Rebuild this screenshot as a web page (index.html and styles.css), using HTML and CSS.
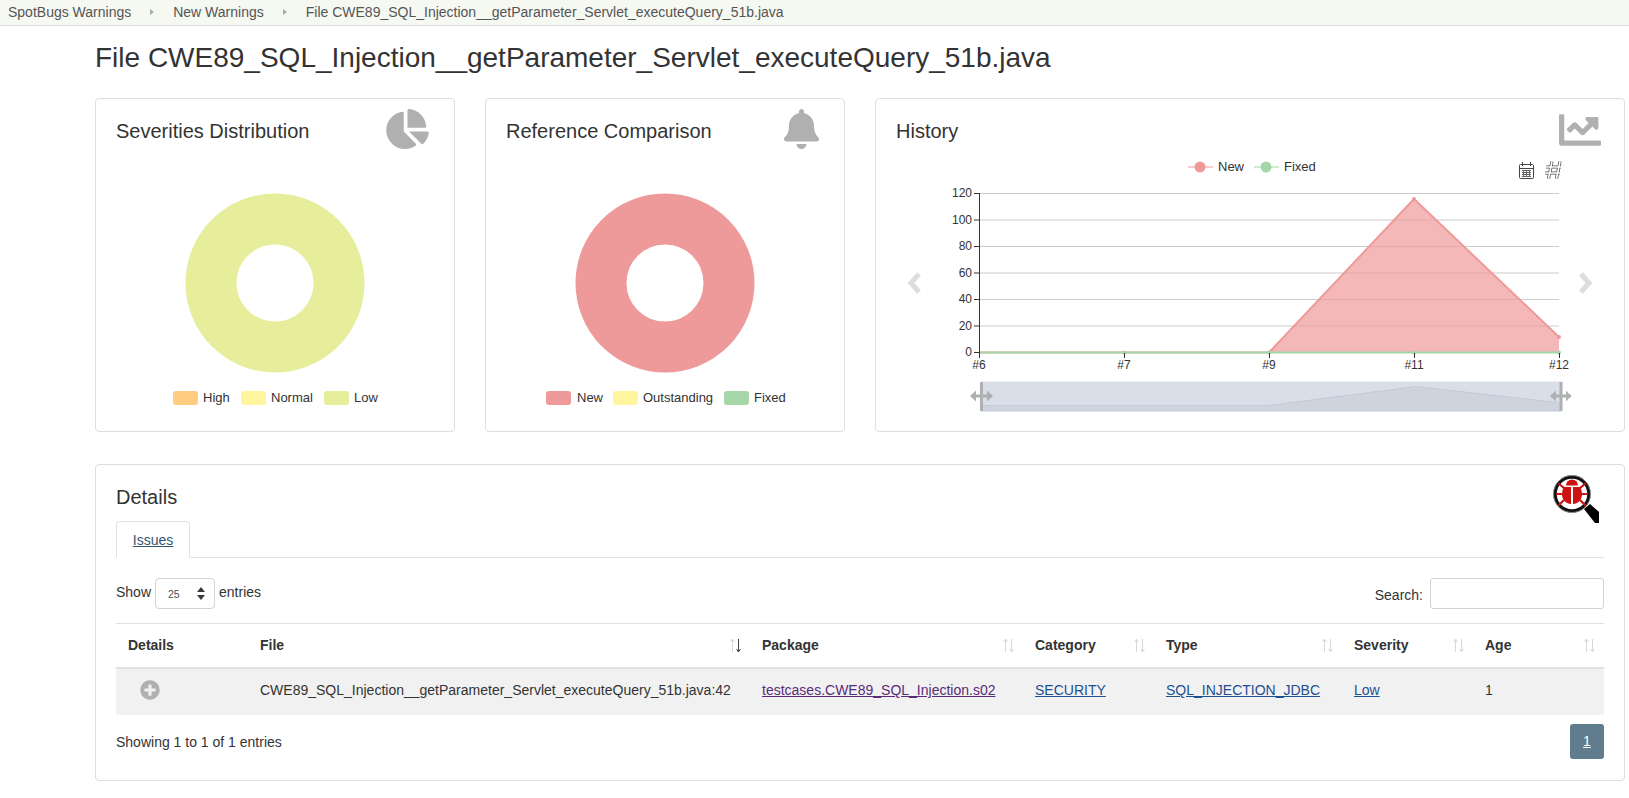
FILE: index.html
```html
<!DOCTYPE html>
<html lang="en">
  <head>
    <meta charset="UTF-8" />
    <meta name="viewport" content="width=device-width, initial-scale=1.0" />
    <title>File CWE89_SQL_Injection__getParameter_Servlet_executeQuery_51b.java</title>
    <link rel="stylesheet" href="styles.css">
  </head>
  <body>
    <nav class="crumbs">
      <span class="crumb">SpotBugs Warnings</span>
      <span class="crumb-sep"></span>
      <span class="crumb">New Warnings</span>
      <span class="crumb-sep"></span>
      <span class="crumb">File CWE89_SQL_Injection__getParameter_Servlet_executeQuery_51b.java</span>
    </nav>

    <main class="page">
      <h1 class="page-title">File CWE89_SQL_Injection__getParameter_Servlet_executeQuery_51b.java</h1>

      <section class="chart-row">
        <div class="card">
          <div class="card-head">
            <h2 class="card-title">Severities Distribution</h2>
            <svg class="head-icon icon-pie" viewBox="0 0 544 512"><path d="M527.79 288H290.5l158.03 158.03c6.04 6.04 15.98 6.53 22.19 .68 38.7-36.46 65.32-85.61 73.13-140.86 1.34-9.46-6.51-17.85-16.06-17.85zm-15.83-64.8C503.72 103.74 408.26 8.28 288.8 .04 279.68-.59 272 7.1 272 16.24V240h223.77c9.14 0 16.82-7.68 16.19-16.8zM224 288V50.71c0-9.55-8.39-17.4-17.84-16.06C86.99 51.49-4.1 155.6 .14 280.37 4.5 408.51 114.83 513.59 243.03 511.98c50.4-.63 96.97-16.87 135.26-44.03 7.9-5.6 8.42-17.23 1.57-24.08L224 288z"/></svg>
          </div>
          <svg class="chart" viewBox="0 0 358 282">
            <circle cx="179" cy="134" r="64" fill="none" stroke="#e6ee9c" stroke-width="51"/>
            <rect class="swatch" x="77" y="242" width="25" height="14" rx="3" fill="#ffcc80"/>
            <text class="legend" x="107" y="253">High</text>
            <rect class="swatch" x="145" y="242" width="25" height="14" rx="3" fill="#fff59d"/>
            <text class="legend" x="175" y="253">Normal</text>
            <rect class="swatch" x="228" y="242" width="25" height="14" rx="3" fill="#e6ee9c"/>
            <text class="legend" x="258" y="253">Low</text>
          </svg>
        </div>

        <div class="card">
          <div class="card-head">
            <h2 class="card-title">Reference Comparison</h2>
            <svg class="head-icon icon-bell" viewBox="0 0 448 512"><path d="M224 512c35.32 0 63.97-28.65 63.97-64H160.03c0 35.35 28.65 64 63.97 64zm215.39-149.71c-19.32-20.76-55.47-51.99-55.47-154.29 0-77.7-54.48-139.9-127.94-155.16V32c0-17.67-14.32-32-31.98-32s-31.98 14.33-31.98 32v20.84C118.56 68.1 64.08 130.3 64.08 208c0 102.3-36.15 133.53-55.47 154.29-6 6.45-8.66 14.16-8.61 21.71.11 16.4 12.98 32 32.1 32h383.8c19.12 0 32-15.6 32.1-32 .05-7.55-2.61-15.27-8.61-21.71z"/></svg>
          </div>
          <svg class="chart" viewBox="0 0 358 282">
            <circle cx="179" cy="134" r="64" fill="none" stroke="#ef9a9a" stroke-width="51"/>
            <rect class="swatch" x="60" y="242" width="25" height="14" rx="3" fill="#ef9a9a"/>
            <text class="legend" x="91" y="253">New</text>
            <rect class="swatch" x="127" y="242" width="25" height="14" rx="3" fill="#fff59d"/>
            <text class="legend" x="157" y="253">Outstanding</text>
            <rect class="swatch" x="238" y="242" width="25" height="14" rx="3" fill="#a5d6a7"/>
            <text class="legend" x="268" y="253">Fixed</text>
          </svg>
        </div>

        <div class="card">
          <div class="card-head">
            <h2 class="card-title">History</h2>
            <svg class="head-icon icon-line" viewBox="0 0 512 512"><path d="M496 384H64V80c0-8.84-7.16-16-16-16H16C7.16 64 0 71.16 0 80v336c0 17.67 14.33 32 32 32h464c8.84 0 16-7.16 16-16v-32c0-8.84-7.16-16-16-16zM464 96H345.94c-21.38 0-32.09 25.85-16.97 40.97l32.4 32.4L288 242.75l-73.37-73.37c-12.5-12.5-32.76-12.5-45.25 0l-68.69 68.69c-6.25 6.25-6.25 16.38 0 22.63l22.62 22.62c6.25 6.25 16.38 6.25 22.63 0L192 237.25l73.37 73.37c12.5 12.5 32.76 12.5 45.25 0l96-96 32.4 32.4c15.12 15.12 40.97 4.41 40.97-16.97V112c0-8.84-7.16-16-16-16z"/></svg>
          </div>
          <svg class="chart" viewBox="876 149 748 282">
            <!-- carousel arrows -->
            <path class="chevron" d="M919 274l-8 9 8 9"/>
            <path class="chevron" d="M1581 274l8 9-8 9"/>

            <!-- legend -->
            <line x1="1188" y1="167" x2="1213" y2="167" stroke="#ef9a9a"/>
            <circle cx="1200" cy="167" r="5.5" fill="#ef9a9a"/>
            <text class="legend" x="1218" y="171">New</text>
            <line x1="1254" y1="167" x2="1279" y2="167" stroke="#a5d6a7"/>
            <circle cx="1266" cy="167" r="5.5" fill="#a5d6a7"/>
            <text class="legend" x="1284" y="171">Fixed</text>

            <!-- toolbox -->
            <g class="tool">
              <rect x="1519.5" y="164.5" width="14" height="14" rx="1"/>
              <path d="M1522.5 162v4M1530.5 162v4M1519.5 168.5h14"/>
              <path class="tool-fill" d="M1522 170.500h9M1522 172.500h9M1522 174.500h9M1522 176.500h9M1523.500 170v7M1526.500 170v7M1529.500 170v7"/>
            </g>
            <g>
              <path class="hash-out" d="M1552 161.500l-3.500 17M1560 161.500l-3.500 17M1546 167h15M1545 173h15"/>
              <path class="hash-in" d="M1552 161.500l-3.500 17M1560 161.500l-3.500 17M1546 167h15M1545 173h15"/>
            </g>

            <!-- grid -->
            <g class="grid">
              <path d="M979 193.5H1559M979 220H1559M979 246.5H1559M979 273H1559M979 299.5H1559M979 326H1559"/>
            </g>
            <path class="area" d="M1269 352.5L1414 199L1559 337V352.5z"/>
            <path class="area-line" d="M979 352.5H1269L1414 199L1559 337"/>
            <circle cx="1414" cy="199" r="2" fill="#ef9a9a"/>
            <circle cx="1559" cy="337" r="2" fill="#ef9a9a"/>
            <path class="fixed-line" d="M979 352.5H1559"/>
            <circle cx="1124" cy="352.5" r="2" fill="#a5d6a7"/>
            <circle cx="1269" cy="352.5" r="2" fill="#a5d6a7"/>
            <circle cx="1414" cy="352.5" r="2" fill="#a5d6a7"/>
            <circle cx="1559" cy="352.5" r="2" fill="#a5d6a7"/>

            <!-- axes -->
            <path class="axis" d="M979.5 193V353M974 193.5h5M974 220h5M974 246.5h5M974 273h5M974 299.5h5M974 326h5M974 352.5h5M979.5 353v5M1124.5 353v5M1269.5 353v5M1414.5 353v5M1559.5 353v5"/>
            <g class="tick-y">
              <text x="972" y="197">120</text>
              <text x="972" y="224">100</text>
              <text x="972" y="250">80</text>
              <text x="972" y="277">60</text>
              <text x="972" y="303">40</text>
              <text x="972" y="330">20</text>
              <text x="972" y="356">0</text>
            </g>
            <g class="tick-x">
              <text x="979" y="369">#6</text>
              <text x="1124" y="369">#7</text>
              <text x="1269" y="369">#9</text>
              <text x="1414" y="369">#11</text>
              <text x="1559" y="369">#12</text>
            </g>

            <!-- zoom slider -->
            <rect x="981.5" y="381.5" width="580" height="29.5" fill="#d9dfe8"/>
            <path d="M981.5 405.5H1269L1416 386.500L1561.500 403V411H981.5z" fill="#ced4de" stroke="#c3cad5"/>
            <g class="handle">
              <path class="handle-bar" d="M981.5 382v29M972 396h20M1561 382v29M1551 396h20"/>
              <path class="handle-tip" d="M976 390.500l-6 5.500 6 5.500zM987 390.500l6 5.500-6 5.500zM1556 390.500l-6 5.500 6 5.500zM1566 390.500l5 5.500-5 5.500z"/>
            </g>
          </svg>
        </div>
      </section>

      <section class="card details">
        <div class="details-head">
          <h2 class="card-title">Details</h2>
          <svg class="bug-icon" viewBox="0 0 46 48">
            <path d="M31 34l11 14h4V37l-9-8z" fill="#000"/>
            <circle cx="19" cy="19" r="17" fill="#fff" stroke="#111" stroke-width="3.500"/>
            <circle cx="19" cy="19" r="18.500" fill="none" stroke="#999" stroke-width="0.800"/>
            <g fill="#cc1212">
              <path d="M13 10.500a6 6 0 0 1 12 0z"/>
              <path d="M10.500 12h7.500v17c-4.500-.5-8.500-3.500-9-8.500 0-3 .500-6 1.500-8.500z"/>
              <path d="M27.500 12H20v17c4.500-.5 8.500-3.500 9-8.500 0-3-.500-6-1.500-8.500z"/>
            </g>
            <g stroke="#cc1212" stroke-width="2.200" fill="none">
              <path d="M11 13L5.500 8.500M27 13l5.500-4.500M9 19H3M29 19h6M11 25l-5.500 5.500M27 25l5.500 5.500"/>
            </g>
          </svg>
        </div>

        <div class="tabs">
          <a class="tab" href="#">Issues</a>
        </div>

        <div class="table-tools">
          <label class="length"><span class="tool-text">Show</span>
            <span class="select-box">25
              <svg class="select-arrows" viewBox="0 0 8 13"><path d="M4 0l4 5H0zM4 13l4-5H0z"/></svg>
            </span>
            <span class="tool-text">entries</span></label>
          <label class="search"><span class="search-text">Search:</span> <input class="search-input" type="text" /></label>
        </div>

        <table class="issues">
          <thead>
            <tr>
              <th class="col-details">Details</th>
              <th class="col-file"><div class="th-in">File<svg class="sort" viewBox="0 0 13 15"><path d="M3.500 14V1M1.500 4l2-3 2 3"/><path class="sort-on" d="M9.500 1v13M7.500 11l2 3 2-3"/></svg></div></th>
              <th class="col-package"><div class="th-in">Package<svg class="sort" viewBox="0 0 13 15"><path d="M3.500 14V1M1.500 4l2-3 2 3M9.500 1v13M7.500 11l2 3 2-3"/></svg></div></th>
              <th class="col-category"><div class="th-in">Category<svg class="sort" viewBox="0 0 13 15"><path d="M3.500 14V1M1.500 4l2-3 2 3M9.500 1v13M7.500 11l2 3 2-3"/></svg></div></th>
              <th class="col-type"><div class="th-in">Type<svg class="sort" viewBox="0 0 13 15"><path d="M3.500 14V1M1.500 4l2-3 2 3M9.500 1v13M7.500 11l2 3 2-3"/></svg></div></th>
              <th class="col-severity"><div class="th-in">Severity<svg class="sort" viewBox="0 0 13 15"><path d="M3.500 14V1M1.500 4l2-3 2 3M9.500 1v13M7.500 11l2 3 2-3"/></svg></div></th>
              <th class="col-age"><div class="th-in">Age<svg class="sort" viewBox="0 0 13 15"><path d="M3.500 14V1M1.500 4l2-3 2 3M9.500 1v13M7.500 11l2 3 2-3"/></svg></div></th>
            </tr>
          </thead>
          <tbody>
            <tr>
              <td class="cell-plus"><svg class="plus-icon" viewBox="0 0 512 512"><path d="M256 8C119 8 8 119 8 256s111 248 248 248 248-111 248-248S393 8 256 8zm144 276c0 6.600-5.400 12-12 12h-92v92c0 6.600-5.400 12-12 12h-56c-6.600 0-12-5.400-12-12v-92h-92c-6.600 0-12-5.400-12-12v-56c0-6.600 5.400-12 12-12h92v-92c0-6.600 5.400-12 12-12h56c6.600 0 12 5.400 12 12v92h92c6.600 0 12 5.400 12 12v56z"/></svg></td>
              <td>CWE89_SQL_Injection__getParameter_Servlet_executeQuery_51b.java:42</td>
              <td><a class="visited" href="#">testcases.CWE89_SQL_Injection.s02</a></td>
              <td><a href="#">SECURITY</a></td>
              <td><a href="#">SQL_INJECTION_JDBC</a></td>
              <td><a href="#">Low</a></td>
              <td>1</td>
            </tr>
          </tbody>
        </table>

        <div class="table-foot">
          <span class="foot-text">Showing 1 to 1 of 1 entries</span>
          <a class="page-btn" href="#">1</a>
        </div>
      </section>
    </main>
  </body>
</html>
```

FILE: styles.css
```css
* {
  box-sizing: border-box;
}

body {
  margin: 0;
  font-family: "Liberation Sans", Arial, sans-serif;
  font-size: 14px;
  color: #333;
  background-color: #fff;
}

a {
  color: #1d4f91;
}

.crumbs {
  display: flex;
  align-items: center;
  height: 26px;
  padding: 0 8px 2px;
  background-color: #f6f8f2;
  border-bottom: 1px solid #dcdfdc;
  color: #555;
}

.crumb-sep {
  width: 0;
  height: 0;
  margin: 0 19px;
  border-left: 4px solid #aaa;
  border-top: 3.5px solid transparent;
  border-bottom: 3.5px solid transparent;
}

.page {
  padding: 0 4px 18px 95px;
}

.page-title {
  margin: 0;
  height: 72px;
  padding-top: 15px;
  font-size: 28px;
  font-weight: 400;
  line-height: 34px;
}

.chart-row {
  display: grid;
  grid-template-columns: 360px 360px 1fr;
  gap: 30px;
  margin-bottom: 32px;
}

.card {
  border: 1px solid #dcdfe2;
  border-radius: 4px;
  background-color: #fff;
}

.card-head {
  display: flex;
  justify-content: space-between;
  height: 50px;
  padding: 10px 25px 0 20px;
}

.card-title {
  margin: 0;
  padding-top: 10px;
  font-size: 20px;
  font-weight: 400;
  line-height: 24px;
}

.head-icon {
  flex: none;
  height: 40px;
  fill: #b0b0b0;
}

.icon-pie {
  width: 43px;
}

.icon-bell {
  width: 35px;
}

.icon-line {
  width: 42px;
  height: 42px;
  margin-right: -2px;
}

.chart {
  display: block;
  width: 100%;
  height: 282px;
}

.legend {
  font-size: 13px;
  fill: #333;
}

.chevron {
  fill: none;
  stroke: #ddd;
  stroke-width: 5;
}

.grid path {
  fill: none;
  stroke: #ccc;
  stroke-width: 1;
}

.area {
  fill: #ef9a9a;
  fill-opacity: 0.7;
}

.area-line {
  fill: none;
  stroke: #ef9a9a;
  stroke-width: 2;
}

.fixed-line {
  fill: none;
  stroke: #a5d6a7;
  stroke-width: 2;
}

.axis {
  fill: none;
  stroke: #333;
  stroke-width: 1;
}

.tick-y text {
  font-size: 12px;
  fill: #333;
  text-anchor: end;
}

.tick-x text {
  font-size: 12px;
  fill: #333;
  text-anchor: middle;
}

.tool rect,
.tool path {
  fill: none;
  stroke: #444;
  stroke-width: 1;
}

.tool .tool-fill {
  stroke: #666;
}

.hash-out {
  fill: none;
  stroke: #555;
  stroke-width: 3.200;
}

.hash-in {
  fill: none;
  stroke: #fff;
  stroke-width: 1.600;
}

.handle-bar {
  fill: none;
  stroke: #b0b0b0;
  stroke-width: 3;
}

.handle-tip {
  fill: #b0b0b0;
}

.details {
  height: 317px;
  padding: 0 20px;
}

.details-head {
  display: flex;
  justify-content: space-between;
  height: 56px;
}

.details .card-title {
  padding-top: 20px;
}

.bug-icon {
  width: 46px;
  height: 48px;
  margin: 10px 5px 0 0;
}

.tabs {
  display: flex;
  height: 37px;
  border-bottom: 1px solid #dee2e6;
}

.tab {
  width: 74px;
  height: 37px;
  border: 1px solid #dee2e6;
  border-bottom-color: #fff;
  border-radius: 4px 4px 0 0;
  color: #33566f;
  line-height: 36px;
  text-align: center;
}

.table-tools {
  display: flex;
  justify-content: space-between;
  align-items: center;
  height: 65px;
  padding-top: 6px;
}

.length,
.search {
  display: flex;
  align-items: center;
  gap: 4px;
}

.tool-text {
  margin-top: -4px;
}

.search-text {
  margin-top: 2px;
}

.select-box {
  display: flex;
  align-items: center;
  justify-content: space-between;
  width: 60px;
  height: 31px;
  padding: 0 9px 0 12px;
  border: 1px solid #ced4da;
  border-radius: 4px;
  font-size: 10.500px;
  color: #495057;
}

.select-arrows {
  width: 8px;
  height: 13px;
  fill: #343a40;
}

.search-input {
  width: 174px;
  height: 31px;
  margin-left: 3px;
  border: 1px solid #ced4da;
  border-radius: 3px;
}

.issues {
  width: 100%;
  table-layout: fixed;
  border-collapse: collapse;
}

.issues th {
  height: 44px;
  padding: 0 12px;
  border-top: 1px solid #dee2e6;
  border-bottom: 2px solid #dee2e6;
  font-weight: 700;
  text-align: left;
}

.issues td {
  height: 47px;
  padding: 0 12px 3px;
  background-color: #f1f1f1;
}

.th-in {
  display: flex;
  justify-content: space-between;
  align-items: center;
}

.sort {
  width: 13px;
  height: 15px;
  margin-right: -4px;
  fill: none;
  stroke: #d8d8dc;
  stroke-width: 1;
}

.sort .sort-on {
  stroke: #444;
}

.col-details {
  width: 132px;
}

.col-file {
  width: 502px;
}

.col-package {
  width: 273px;
}

.col-category,
.col-severity,
.col-age {
  width: 131px;
}

.col-type {
  width: 188px;
}

.issues .cell-plus {
  padding-left: 24px;
  padding-bottom: 0;
}

.plus-icon {
  display: block;
  width: 20px;
  height: 20px;
  margin-bottom: 4px;
  fill: #b0b0b0;
}

.visited {
  color: #5a2a78;
}

.table-foot {
  display: flex;
  justify-content: space-between;
  align-items: center;
  padding-top: 9px;
}

.foot-text {
  margin-top: 1px;
}

.page-btn {
  width: 34px;
  height: 35px;
  border-radius: 3px;
  background-color: #5f7d8e;
  color: #fff;
  line-height: 35px;
  text-align: center;
}
```
